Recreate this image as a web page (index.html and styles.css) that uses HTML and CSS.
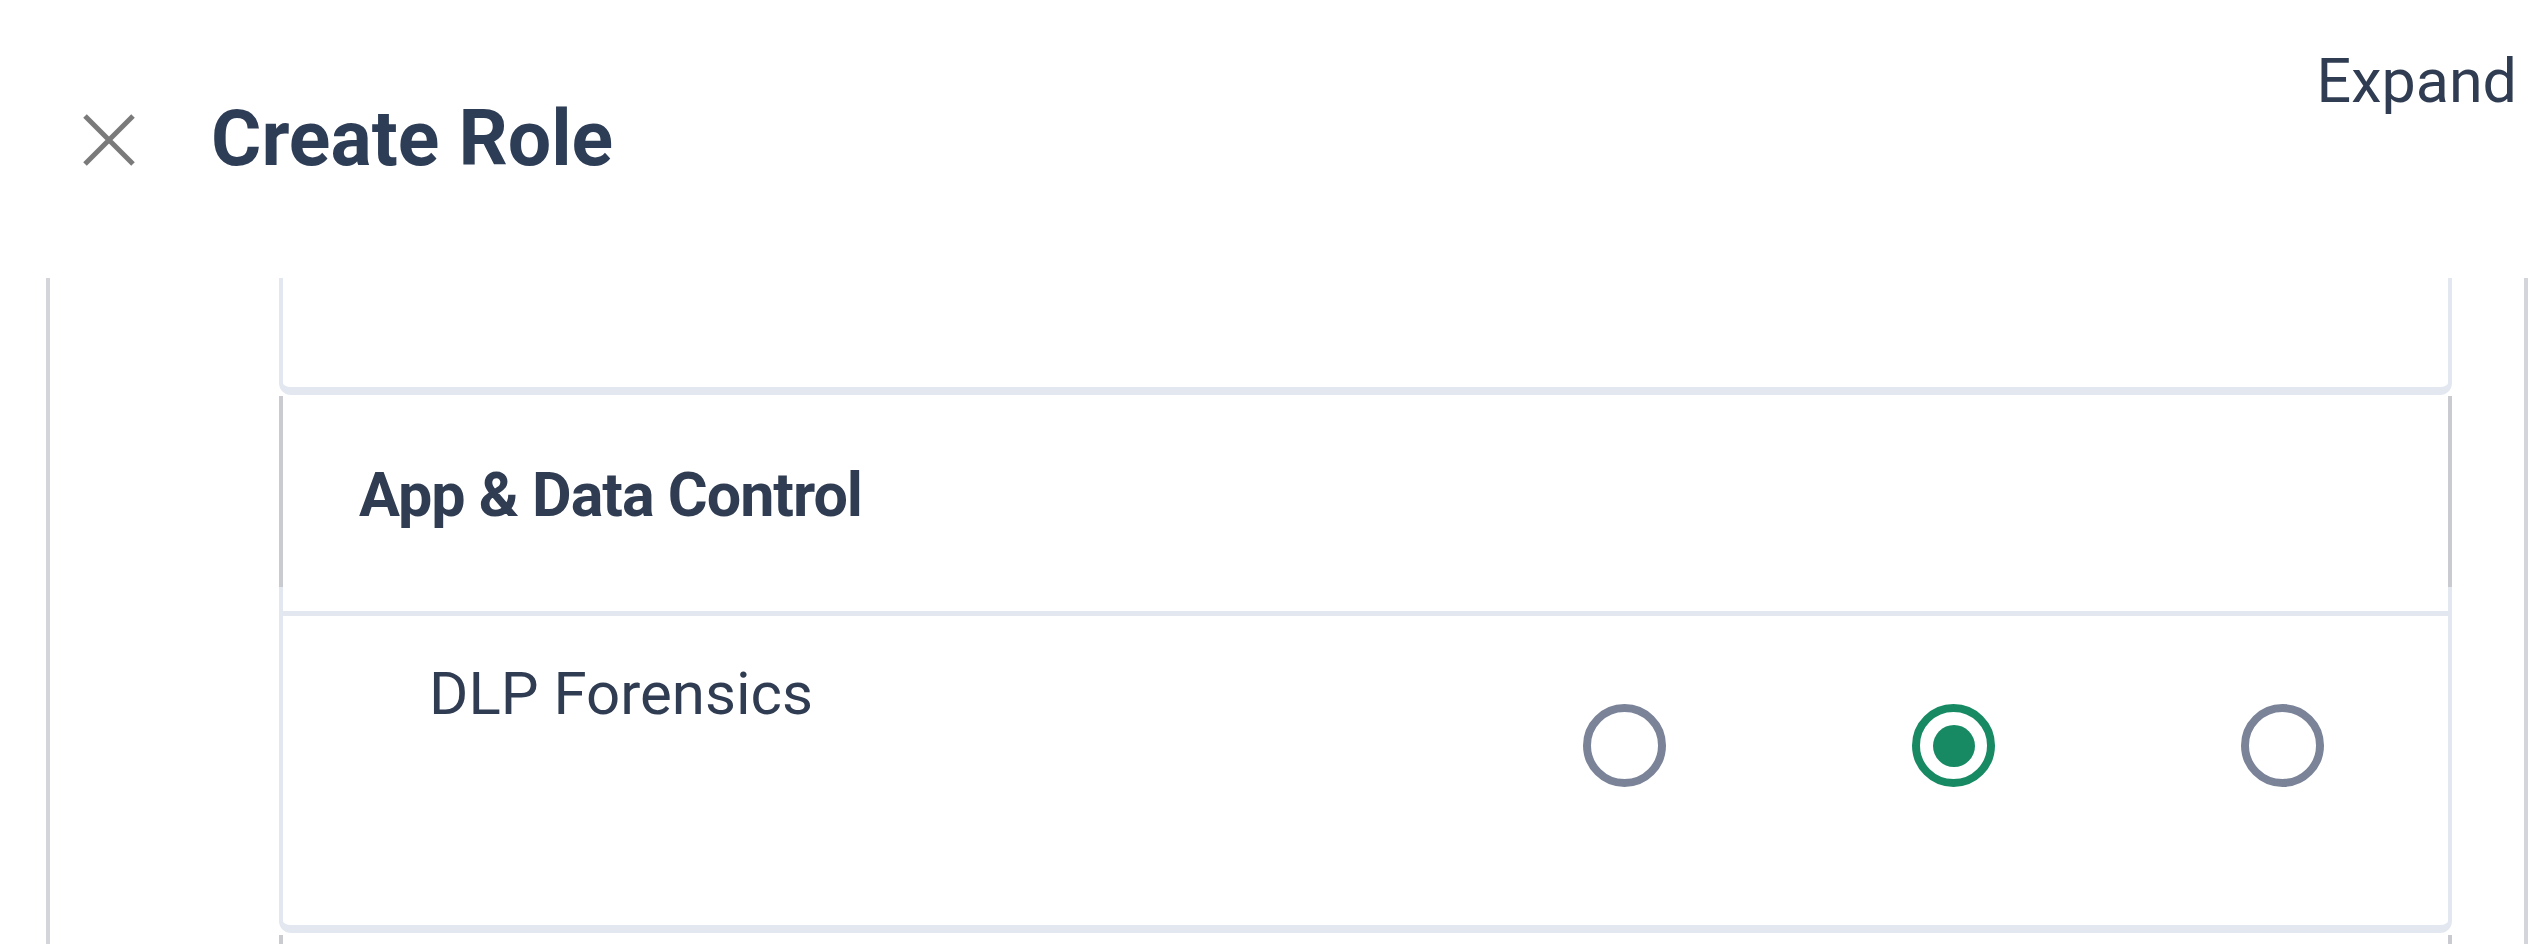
FILE: index.html
```html
<!DOCTYPE html>
<html lang="en">
<head>
<meta charset="utf-8">
<title>Create Role</title>
<link rel="stylesheet" href="styles.css">
</head>
<body>
<header class="header">
  <div class="title-row">
    <button class="close" aria-label="Close">
      <svg width="52" height="52" viewBox="0 0 52 52"><path d="M2 2 L50 50 M50 2 L2 50" stroke="#7a7a7a" stroke-width="5" fill="none"/></svg>
    </button>
    <h1 class="title">Create Role</h1>
  </div>
  <div class="expand">Expand</div>
</header>
<main class="panel">
  <section class="card card-prev"></section>
  <section class="card">
    <div class="sect-wrap">
      <div class="sect-head">App &amp; Data Control</div>
    </div>
    <div class="row">
      <div class="row-label">DLP Forensics</div>
      <div class="cell"><span class="radio"></span></div>
      <div class="cell"><span class="radio checked"></span></div>
      <div class="cell"><span class="radio"></span></div>
    </div>
  </section>
  <section class="card card-next">
    <div class="sect-head"></div>
  </section>
</main>
</body>
</html>
```
FILE: styles.css
```css
* { box-sizing: border-box; }
html, body { margin: 0; padding: 0; background: #fff; }
body {
  width: 2534px;
  height: 944px;
  overflow: hidden;
  font-family: Roboto, "Liberation Sans", Arial, sans-serif;
  color: #2f3c52;
}
.header {
  height: 278px;
  display: flex;
  justify-content: space-between;
  align-items: flex-start;
}
.title-row {
  display: flex;
  align-items: center;
  padding-top: 101px;
  padding-left: 83px;
  gap: 76px;
}
.close {
  width: 52px;
  height: 52px;
  padding: 0;
  border: 0;
  background: none;
  display: block;
}
.close svg { display: block; }
.title {
  margin: 0;
  font-size: 77px;
  line-height: 1;
  font-weight: 700;
  color: #2e3d56;
}
.expand {
  padding-top: 51px;
  padding-right: 17px;
  font-size: 61px;
  line-height: 1;
  color: #2f3c52;
}
.panel {
  margin-left: 46px;
  width: 2482px;
  height: 666px;
  overflow: hidden;
  border-left: 4px solid #d3d5da;
  border-right: 4px solid #d3d5da;
  padding: 0 72px 0 229px;
}
.card {
  border-left: 4px solid #e3e8f0;
  border-right: 4px solid #e3e8f0;
  border-bottom: 8px solid #e3e8f0;
  border-radius: 0 0 12px 12px;
  background: #fff;
}
.card-prev { height: 117px; }
.card + .card { margin-top: 1px; }
.card-next { margin-top: 2px !important; border-bottom: 0; height: 60px; }
.sect-wrap {
  padding-bottom: 24px;
  border-bottom: 5px solid #e3e8f0;
}
.sect-head {
  height: 191px;
  display: flex;
  align-items: center;
  padding: 7px 0 0 76px;
  font-size: 61px;
  letter-spacing: -1px;
  line-height: 1;
  font-weight: 700;
  color: #2f3c52;
  box-shadow: -4px 0 0 #c9cbd0, 4px 0 0 #c9cbd0;
}
.row {
  height: 309px;
  display: grid;
  grid-template-columns: 1fr repeat(3, 329px);
  align-items: start;
  padding-top: 48px;
  padding-right: 1px;
}
.row-label {
  padding-left: 146px;
  font-size: 60px;
  line-height: 1;
  color: #2f3c52;
}
.cell {
  display: flex;
  justify-content: center;
  padding-top: 40px;
}
.radio {
  width: 83px;
  height: 83px;
  border-radius: 50%;
  border: 8px solid #7a8398;
  display: flex;
  align-items: center;
  justify-content: center;
}
.radio.checked { border-color: #178a64; }
.radio.checked::after {
  content: "";
  width: 42px;
  height: 42px;
  border-radius: 50%;
  background: #178a64;
}
```
